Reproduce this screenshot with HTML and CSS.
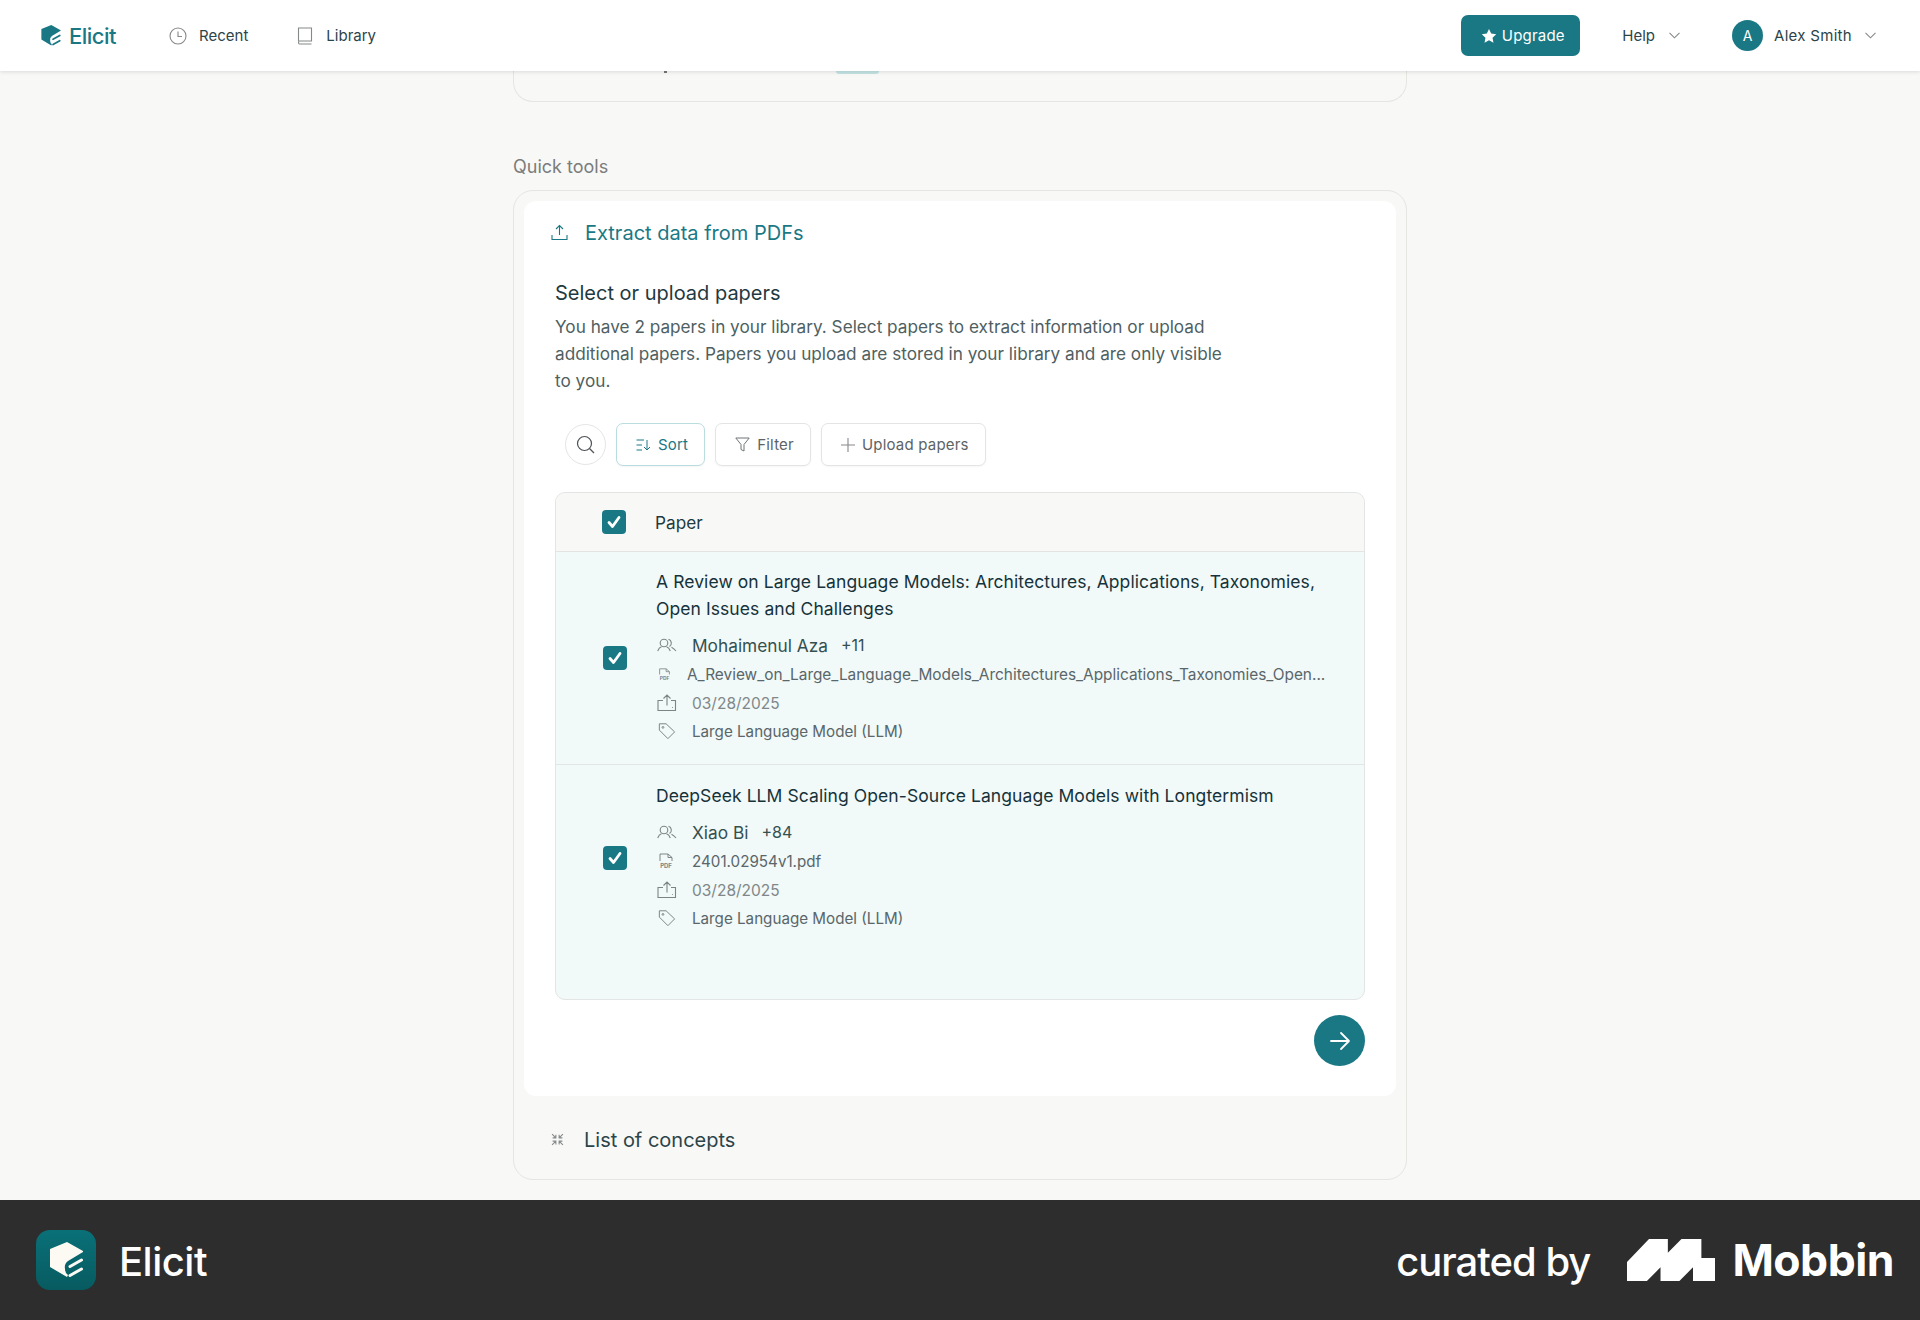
FILE: index.html
```html
<!DOCTYPE html>
<html lang="en">
<head>
    <meta charset="UTF-8">
    <title>Elicit - Extract data from PDFs</title>
    <link rel="stylesheet" href="styles.css">
</head>
<body>

    <svg class="defs" width="0" height="0">
        <symbol id="elicitMark" viewBox="0 0 33 36">
            <path fill="currentColor" d="M0 7 L17 0 L33 9 L33 10 L18 19 Q14 22 15 27 Q15 31 18 33 L17 35 L0 25 Z"/>
            <path fill="none" stroke="currentColor" stroke-width="3" stroke-linecap="round" d="M31.5 18 L20 24.5 M31.5 27 L20 33.5"/>
        </symbol>
        <symbol id="checkMark" viewBox="0 0 24 24">
            <rect width="24" height="24" rx="4" fill="#1a7885"/>
            <path fill="none" stroke="#fff" stroke-width="2.8" stroke-linecap="round" stroke-linejoin="round" d="M7 12.5 L10.5 16.5 L17 7.5"/>
        </symbol>
        <symbol id="people" viewBox="0 -1.5 20 16">
            <g fill="none" stroke="currentColor" stroke-width="1.1">
                <circle cx="7" cy="4.5" r="3.8"/>
                <path d="M0.7 12.5 Q2 9 4.5 8.2 M9.5 8.2 Q12 9 13.3 12.5"/>
                <path d="M11.5 0.8 A4 4 0 0 1 12.5 8 M14.5 8.7 Q17 10 19 12.5"/>
            </g>
        </symbol>
        <symbol id="upload" viewBox="0 0 20 18">
            <g fill="none" stroke="currentColor" stroke-width="1.1">
                <path d="M6 6.5 H1 V16.5 H18.5 V6.5 H14 M10 11.5 V1 M6.5 4.5 L10 1 L13.5 4.5 M15 13.5 H15.8"/>
            </g>
        </symbol>
        <symbol id="tag" viewBox="0 0 20 20">
            <g fill="none" stroke="currentColor" stroke-width="1.1">
                <path d="M1.5 2 H9 L18.5 11 L11 18.5 L1.5 9 Z"/>
                <circle cx="5.5" cy="6" r="1"/>
            </g>
        </symbol>
    </svg>

    <header class="topbar">
        <a class="brand">
            <svg class="brand-mark"><use href="#elicitMark"/></svg>
            <span>Elicit</span>
        </a>
        <a class="nav-item nav-recent">
            <svg width="18" height="18" viewBox="0 0 18 18" fill="none" stroke="#85898a" stroke-width="1.1"><circle cx="9" cy="9" r="8"/><path d="M9 4.5 V9.5 H13"/></svg>
            Recent
        </a>
        <a class="nav-item nav-library">
            <svg width="16" height="18" viewBox="0 0 16 18" fill="none" stroke="#85898a" stroke-width="1.1"><path d="M1.5 14 V1 H14.5 V14 H2.5 Q1.5 14 1.5 15.5 Q1.5 17 2.5 17 H14.5"/></svg>
            Library
        </a>
        <span class="spacer"></span>
        <button class="upgrade">
            <svg width="16" height="16" viewBox="0 0 24 24" fill="#fff"><path d="M12 1.5 L15.3 8.4 L22.8 9.4 L17.3 14.6 L18.7 22.1 L12 18.5 L5.3 22.1 L6.7 14.6 L1.2 9.4 L8.7 8.4 Z"/></svg>
            Upgrade
        </button>
        <a class="nav-item nav-help">
            Help
            <svg class="chevron" width="11" height="7" viewBox="0 0 11 7" fill="none" stroke="#85898a" stroke-width="1.1"><path d="M0.5 0.8 L5.5 5.8 L10.5 0.8"/></svg>
        </a>
        <a class="nav-item nav-user">
            <span class="avatar">A</span>
            <span class="user-name">Alex Smith</span>
            <svg class="chevron" width="11" height="7" viewBox="0 0 11 7" fill="none" stroke="#85898a" stroke-width="1.1"><path d="M0.5 0.8 L5.5 5.8 L10.5 0.8"/></svg>
        </a>
    </header>

    <main class="page">
        <div class="column">
            <div class="peek-card">
                <span class="peek-tick"></span>
                <span class="peek-chip"></span>
            </div>

            <p class="section-label">Quick tools</p>

            <section class="tools-card">
                <div class="panel">
                    <div class="panel-head">
                        <svg width="17" height="17" viewBox="0 0 17 17" fill="none" stroke="#1a7885" stroke-width="1.1"><path d="M8.5 11 V1.5 M5 5 L8.5 1.5 L12 5 M1 11 V15.5 H16 V11"/></svg>
                        <span>Extract data from PDFs</span>
                    </div>
                    <div class="panel-body">
                        <h2>Select or upload papers</h2>
                        <p class="intro">You have 2 papers in your library. Select papers to extract information or upload additional papers. Papers you upload are stored in your library and are only visible to you.</p>

                        <div class="toolbar">
                            <button class="round-btn">
                                <svg width="19" height="19" viewBox="0 0 19 19" fill="none" stroke="#4d5254" stroke-width="1.2"><circle cx="8.5" cy="8.5" r="7"/><path d="M13.5 13.5 L18 18"/></svg>
                            </button>
                            <button class="tool-btn tool-active">
                                <svg width="15" height="12" viewBox="0 0 15 12" fill="none" stroke="#1a7885" stroke-width="1"><path d="M0.5 1 H8 M0.5 6 H6 M0.5 11 H6 M11 1 V11 M8 8 L11 11 L14 8"/></svg>
                                Sort
                            </button>
                            <button class="tool-btn">
                                <svg width="15" height="15" viewBox="0 0 15 15" fill="none" stroke="#6f7476" stroke-width="1"><path d="M0.8 1 H14.2 L9 7.5 V14 L6 12.5 V7.5 Z"/></svg>
                                Filter
                            </button>
                            <button class="tool-btn">
                                <svg width="14" height="14" viewBox="0 0 14 14" fill="none" stroke="#85898a" stroke-width="1.1"><path d="M7 0 V14 M0 7 H14"/></svg>
                                Upload papers
                            </button>
                        </div>

                        <div class="papers">
                            <div class="papers-head">
                                <svg class="check"><use href="#checkMark"/></svg>
                                <span>Paper</span>
                            </div>

                            <div class="paper paper-first">
                                <svg class="check"><use href="#checkMark"/></svg>
                                <div class="paper-info">
                                    <h3>A Review on Large Language Models: Architectures, Applications, Taxonomies, Open Issues and Challenges</h3>
                                    <div class="meta meta-author">
                                        <svg class="meta-icon"><use href="#people"/></svg>
                                        <span class="author">Mohaimenul Aza</span>
                                        <span class="more">+11</span>
                                    </div>
                                    <div class="meta">
                                        <svg class="pdf-icon pdf-small" viewBox="0 0 16 16">
                                            <path fill="none" stroke="currentColor" stroke-width="1" d="M2 8 V1 H10 L14 4.5 V8 M10 1 V4.5 H14"/>
                                            <text x="8" y="15" text-anchor="middle" class="pdf-label">PDF</text>
                                        </svg>
                                        <span class="file-long">A_Review_on_Large_Language_Models_Architectures_Applications_Taxonomies_Open...</span>
                                    </div>
                                    <div class="meta meta-date">
                                        <svg class="meta-icon"><use href="#upload"/></svg>
                                        <span>03/28/2025</span>
                                    </div>
                                    <div class="meta">
                                        <svg class="meta-icon"><use href="#tag"/></svg>
                                        <span>Large Language Model (LLM)</span>
                                    </div>
                                </div>
                            </div>

                            <div class="paper">
                                <svg class="check"><use href="#checkMark"/></svg>
                                <div class="paper-info">
                                    <h3>DeepSeek LLM Scaling Open-Source Language Models with Longtermism</h3>
                                    <div class="meta meta-author">
                                        <svg class="meta-icon"><use href="#people"/></svg>
                                        <span class="author">Xiao Bi</span>
                                        <span class="more">+84</span>
                                    </div>
                                    <div class="meta">
                                        <svg class="pdf-icon pdf-large" viewBox="0 0 16 16">
                                            <path fill="none" stroke="currentColor" stroke-width="1" d="M2 8 V1 H10 L14 4.5 V8 M10 1 V4.5 H14"/>
                                            <text x="8" y="15" text-anchor="middle" class="pdf-label">PDF</text>
                                        </svg>
                                        <span>2401.02954v1.pdf</span>
                                    </div>
                                    <div class="meta meta-date">
                                        <svg class="meta-icon"><use href="#upload"/></svg>
                                        <span>03/28/2025</span>
                                    </div>
                                    <div class="meta">
                                        <svg class="meta-icon"><use href="#tag"/></svg>
                                        <span>Large Language Model (LLM)</span>
                                    </div>
                                </div>
                            </div>
                        </div>

                        <div class="panel-actions">
                            <button class="next-btn">
                                <svg width="22" height="20" viewBox="0 0 22 20" fill="none" stroke="#fff" stroke-width="1.8" stroke-linecap="round" stroke-linejoin="round"><path d="M2 10 H20 M12 2 L20 10 L12 18"/></svg>
                            </button>
                        </div>
                    </div>
                </div>

                <div class="tool-row">
                    <svg width="13" height="13" viewBox="0 0 12 12" fill="none" stroke="#85898a" stroke-width="1"><path d="M1 1 L4.5 4.5 M4.5 1.5 V4.5 H1.5 M11 1 L7.5 4.5 M7.5 1.5 V4.5 H10.5 M1 11 L4.5 7.5 M4.5 10.5 V7.5 H1.5 M11 11 L7.5 7.5 M7.5 10.5 V7.5 H10.5"/></svg>
                    <span>List of concepts</span>
                </div>
            </section>
        </div>
    </main>

    <footer class="credit">
        <div class="credit-app">
            <span class="credit-logo"><svg><use href="#elicitMark"/></svg></span>
            <span class="credit-name">Elicit</span>
        </div>
        <div class="credit-by">
            <span class="curated">curated by</span>
            <svg class="mobbin-mark" viewBox="0 0 84 40" fill="#fff"><path d="M0 40 V22 L21 0 H39 V13 L52 0 H71 V18 H84 V40 H63 V27 L50 40 H32 V27 L19 40 Z"/></svg>
            <span class="mobbin-name">Mobbin</span>
        </div>
    </footer>

</body>
</html>
```

FILE: styles.css
```css
* {
    margin: 0;
    padding: 0;
    box-sizing: border-box;
}

body {
    font-family: Inter, "Noto Sans", sans-serif;
    background-color: #f8f8f7;
    color: #1f3a3f;
    width: 1920px;
    height: 1320px;
    overflow: hidden;
}

button {
    font-family: inherit;
    cursor: pointer;
}

.defs {
    position: absolute;
}

/* top bar */
.topbar {
    position: relative;
    z-index: 2;
    display: flex;
    align-items: center;
    height: 71px;
    padding-left: 41px;
    background-color: white;
    box-shadow: 0 1px 4px rgba(0, 0, 0, 0.12);
}

.brand {
    display: flex;
    align-items: center;
    gap: 8px;
    font-size: 22px;
    font-weight: 500;
    letter-spacing: -0.5px;
    color: #1a7885;
}

.brand-mark {
    width: 20px;
    height: 21px;
}

.nav-item {
    display: flex;
    align-items: center;
    font-size: 15px;
    color: #2c4449;
}

.nav-recent {
    margin-left: 53px;
    gap: 12px;
}

.nav-library {
    margin-left: 49px;
    gap: 13px;
}

.spacer {
    flex: 1;
}

.upgrade {
    display: flex;
    align-items: center;
    justify-content: center;
    gap: 5px;
    width: 119px;
    height: 41px;
    padding-left: 4px;
    background-color: #1a7885;
    color: white;
    border: none;
    border-radius: 7px;
    font-size: 15px;
    letter-spacing: 0.2px;
}

.nav-help {
    margin-left: 42px;
    gap: 14px;
}

.nav-user {
    margin-left: 52px;
    margin-right: 44px;
}

.user-name {
    letter-spacing: 0.3px;
}

.nav-user .chevron {
    margin-left: 13px;
}

.avatar {
    display: flex;
    align-items: center;
    justify-content: center;
    width: 31px;
    height: 31px;
    margin-right: 11px;
    border-radius: 50%;
    background-color: #1a7885;
    color: white;
    font-size: 14px;
}

/* page */
.page {
    height: 1129px;
    overflow: hidden;
}

.column {
    width: 894px;
    margin: 0 auto;
}

.peek-card {
    display: flex;
    align-items: flex-start;
    height: 31px;
    padding-left: 150px;
    border: 1px solid #e5e5e2;
    border-top: none;
    border-radius: 0 0 20px 20px;
}

.peek-tick {
    width: 3px;
    height: 2px;
    background-color: #777;
}

.peek-chip {
    width: 43px;
    height: 3px;
    margin-left: 169px;
    border-radius: 0 0 6px 6px;
    background-color: #c5e3e4;
}

.section-label {
    margin-top: 53px;
    margin-bottom: 11px;
    font-size: 18px;
    line-height: 24px;
    color: #7b7c7c;
}

.tools-card {
    height: 990px;
    padding: 10px 10px 0;
    border: 1px solid #e5e5e2;
    border-radius: 20px;
}

.panel {
    height: 895px;
    background-color: white;
    border-radius: 12px;
}

.panel-head {
    display: flex;
    align-items: center;
    gap: 17px;
    height: 63px;
    padding-left: 27px;
    font-size: 20px;
    color: #1a7885;
}

.panel-body {
    padding: 0 31px;
}

h2 {
    margin-top: 16px;
    font-size: 20px;
    font-weight: 400;
    line-height: 26px;
    color: #1f3a3f;
}

.intro {
    width: 680px;
    margin-top: 7px;
    font-size: 17.2px;
    line-height: 27px;
    color: #4f5f62;
}

.toolbar {
    display: flex;
    align-items: center;
    gap: 10px;
    margin-top: 29px;
    padding-left: 10px;
}

.round-btn {
    display: flex;
    align-items: center;
    justify-content: center;
    width: 41px;
    height: 41px;
    border: 1px solid #e3e5e4;
    border-radius: 50%;
    background-color: white;
}

.tool-btn {
    display: flex;
    align-items: center;
    gap: 7px;
    height: 43px;
    padding: 0 16px 0 19px;
    border: 1px solid #e3e5e4;
    border-radius: 7px;
    background-color: white;
    font-size: 15px;
    letter-spacing: 0.2px;
    color: #5c6466;
    box-shadow: 0 1px 2px rgba(0, 0, 0, 0.04);
}

.tool-active {
    border-color: #b9dcdf;
    color: #1a7885;
}

/* paper table */
.papers {
    height: 508px;
    margin-top: 26px;
    border: 1px solid #e3e5e4;
    border-radius: 10px;
    background-color: #f1f9f9;
    overflow: hidden;
}

.papers-head {
    display: flex;
    align-items: center;
    gap: 29px;
    height: 59px;
    padding-left: 46px;
    background-color: #f8f8f7;
    border-bottom: 1px solid #e3e5e4;
    font-size: 17.2px;
}

.check {
    flex: none;
    width: 24px;
    height: 24px;
}

.paper {
    display: flex;
    align-items: center;
    gap: 29px;
    padding: 17px 30px 20px 47px;
}

.paper .check {
    margin-top: 2px;
}

.paper-first {
    padding-top: 16px;
    padding-bottom: 19px;
    border-bottom: 1px solid #e3e5e4;
}

.paper-info {
    flex: 1;
    min-width: 0;
}

h3 {
    font-size: 17.5px;
    font-weight: 400;
    letter-spacing: 0.08px;
    line-height: 27px;
    margin-bottom: 8px;
    color: #16323a;
}

.meta {
    display: flex;
    align-items: center;
    height: 28px;
    font-size: 15.2px;
    color: #5a6669;
}

.meta-author {
    height: 30px;
    font-size: 17.3px;
    color: #35504f;
}

.meta-date {
    margin-top: 1px;
    font-size: 15.5px;
    color: #7f8788;
}

.meta-icon {
    flex: none;
    width: 20px;
    height: 18px;
    margin: 0 15px 0 1px;
    color: #7e8485;
}

.pdf-icon {
    flex: none;
    color: #7e8485;
}

.pdf-label {
    font-size: 6px;
    font-weight: 700;
    fill: currentColor;
}

.pdf-small {
    width: 13px;
    height: 13px;
    margin: 0 16px 0 2px;
}

.file-long {
    font-size: 15.4px;
}

.pdf-large {
    width: 16px;
    height: 16px;
    margin: 0 18px 0 2px;
}

.more {
    margin-left: 13px;
    font-size: 16px;
}

.panel-actions {
    display: flex;
    justify-content: flex-end;
    margin-top: 15px;
}

.next-btn {
    display: flex;
    align-items: center;
    justify-content: center;
    width: 51px;
    height: 51px;
    border: none;
    border-radius: 50%;
    background-color: #1a7885;
}

.tool-row {
    display: flex;
    align-items: center;
    gap: 20px;
    height: 83px;
    padding: 4px 0 0 27px;
    font-size: 20px;
    color: #2c4449;
}

/* footer strip */
.credit {
    display: flex;
    align-items: center;
    justify-content: space-between;
    height: 120px;
    padding: 0 26px 0 36px;
    background-color: #2d2d2d;
    color: white;
}

.credit-app,
.credit-by {
    display: flex;
    align-items: center;
}

.credit-logo {
    display: flex;
    align-items: center;
    justify-content: center;
    width: 60px;
    height: 60px;
    border-radius: 14px;
    background: linear-gradient(#0a7078, #075b60);
    color: #fdf9f3;
}

.credit-logo svg {
    width: 33px;
    height: 36px;
}

.credit-name {
    margin-left: 23px;
    padding-top: 2px;
    font-size: 40px;
    font-weight: 500;
    letter-spacing: -0.5px;
}

.curated {
    padding-top: 2px;
    font-size: 40px;
    font-weight: 500;
    letter-spacing: -1px;
}

.mobbin-mark {
    width: 88px;
    height: 42px;
    margin-left: 37px;
}

.mobbin-name {
    margin-left: 17px;
    font-size: 44.5px;
    font-weight: 700;
    letter-spacing: -0.5px;
}
```
